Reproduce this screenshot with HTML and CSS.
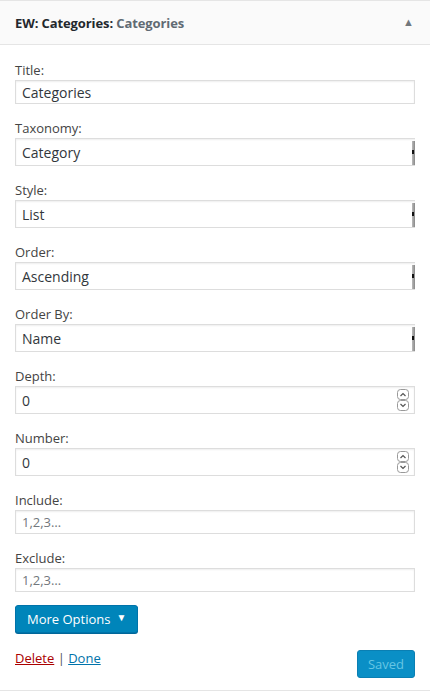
FILE: index.html
```html
<!DOCTYPE html>
<html>
<head>
<meta charset="utf-8">
<link rel="stylesheet" href="styles.css">
</head>
<body>
<div class="widget">
  <div class="widget-top">
    <h3 class="widget-title">EW: Categories<span class="colon">:</span> <span class="in-title">Categories</span></h3>
    <span class="toggle">&#9650;</span>
  </div>
  <div class="widget-inside">
    <div class="field">
      <label class="lbl">Title:</label>
      <div class="input text">Categories</div>
    </div>
    <div class="field">
      <label class="lbl">Taxonomy:</label>
      <div class="input select"><span>Category</span><span class="sel-edge"></span></div>
    </div>
    <div class="field">
      <label class="lbl">Style:</label>
      <div class="input select"><span>List</span><span class="sel-edge"></span></div>
    </div>
    <div class="field">
      <label class="lbl">Order:</label>
      <div class="input select"><span>Ascending</span><span class="sel-edge"></span></div>
    </div>
    <div class="field">
      <label class="lbl">Order By:</label>
      <div class="input select"><span>Name</span><span class="sel-edge"></span></div>
    </div>
    <div class="field">
      <label class="lbl">Depth:</label>
      <div class="input number"><span>0</span>
        <span class="spin">
          <svg width="12" height="22" viewBox="0 0 12 22"><rect x="0.5" y="0.5" width="11" height="10" rx="3" fill="#fff" stroke="#999"/><rect x="0.5" y="11.5" width="11" height="10" rx="3" fill="#fff" stroke="#999"/><path d="M3.5 7 L6 4.5 L8.5 7" fill="none" stroke="#555" stroke-width="1.2"/><path d="M3.5 15 L6 17.5 L8.5 15" fill="none" stroke="#555" stroke-width="1.2"/></svg>
        </span>
      </div>
    </div>
    <div class="field">
      <label class="lbl">Number:</label>
      <div class="input number"><span>0</span>
        <span class="spin">
          <svg width="12" height="22" viewBox="0 0 12 22"><rect x="0.5" y="0.5" width="11" height="10" rx="3" fill="#fff" stroke="#999"/><rect x="0.5" y="11.5" width="11" height="10" rx="3" fill="#fff" stroke="#999"/><path d="M3.5 7 L6 4.5 L8.5 7" fill="none" stroke="#555" stroke-width="1.2"/><path d="M3.5 15 L6 17.5 L8.5 15" fill="none" stroke="#555" stroke-width="1.2"/></svg>
        </span>
      </div>
    </div>
    <div class="field">
      <label class="lbl">Include:</label>
      <div class="input text placeholder">1,2,3…</div>
    </div>
    <div class="field">
      <label class="lbl">Exclude:</label>
      <div class="input text placeholder">1,2,3…</div>
    </div>
    <div class="more-row">
      <span class="btn-primary">More Options <span class="caret">&#9660;</span></span>
    </div>
    <div class="actions">
      <div class="links"><a class="delete">Delete</a> | <a class="done">Done</a></div>
      <span class="btn-saved">Saved</span>
    </div>
  </div>
</div>
</body>
</html>
```
FILE: styles.css
```css
html, body {
  margin: 0;
  padding: 0;
  background: #fff;
}
body {
  font-family: "Open Sans", "Noto Sans", sans-serif;
  color: #32373c;
  font-size: 13px;
}
.widget {
  border-top: 1px solid #e5e5e5;
  border-bottom: 1px solid #e5e5e5;
  height: 691px;
  box-sizing: border-box;
}
.widget-top {
  height: 43px;
  background: #fafafa;
  border-bottom: 1px solid #e5e5e5;
  display: flex;
  align-items: center;
  justify-content: space-between;
  padding: 0 16px 0 15px;
}
.widget-title {
  margin: 0;
  font-size: 13px;
  font-weight: 700;
  color: #23282d;
  letter-spacing: -0.1px;
}
.in-title {
  color: #606a73;
}
.toggle {
  font-size: 11px;
  color: #72777c;
  margin-top: -3px;
}
.widget-inside {
  padding: 16px 15px 0 15px;
}
.field {
  display: flex;
  flex-direction: column;
  margin-bottom: 15px;
}
.lbl {
  font-size: 13px;
  line-height: 18px;
  color: #444;
  margin-bottom: 1px;
}
.input {
  box-sizing: border-box;
  border: 1px solid #ddd;
  box-shadow: inset 0 1px 2px rgba(0,0,0,0.07);
  background: #fff;
  color: #32373c;
  font-size: 14px;
  display: flex;
  align-items: center;
  padding: 0 6px;
}
.text {
  height: 24px;
}
.placeholder {
  color: #72777c;
  font-size: 13px;
}
.select {
  height: 28px;
  justify-content: space-between;
  padding-right: 0;
  border-right: none;
}
.sel-edge {
  align-self: stretch;
  width: 3px;
  margin: 2px 0 0 0;
  background: linear-gradient(to right, #bbb 0, #888 100%);
  position: relative;
}
.sel-edge::after {
  content: "";
  position: absolute;
  left: 0;
  top: 9px;
  width: 2px;
  height: 4px;
  background: #111;
}
.number {
  height: 28px;
  justify-content: space-between;
  padding-right: 5px;
}
.spin {
  display: flex;
}
.more-row {
  margin-top: -2px;
  display: flex;
}
.btn-primary {
  box-sizing: border-box;
  height: 28px;
  padding: 0 11px 0 11px;
  background: #0085ba;
  border: 1px solid #0073aa;
  border-radius: 3px;
  box-shadow: 0 1px 0 #006799;
  color: #fff;
  font-size: 13px;
  display: flex;
  align-items: center;
  gap: 6px;
}
.caret {
  font-size: 10px;
  margin-top: -5px;
}
.actions {
  display: flex;
  justify-content: space-between;
  align-items: flex-start;
  margin-top: 16px;
}
.links {
  font-size: 13px;
  line-height: 18px;
  color: #555;
}
.delete {
  color: #a00;
  text-decoration: underline;
}
.done {
  color: #0073aa;
  text-decoration: underline;
}
.btn-saved {
  box-sizing: border-box;
  height: 28px;
  width: 58px;
  margin-top: 1px;
  background: #0a8fc6;
  border: 1px solid #0a7fb3;
  border-radius: 3px;
  color: #66c6e4;
  font-size: 13px;
  display: flex;
  align-items: center;
  justify-content: center;
}
```
